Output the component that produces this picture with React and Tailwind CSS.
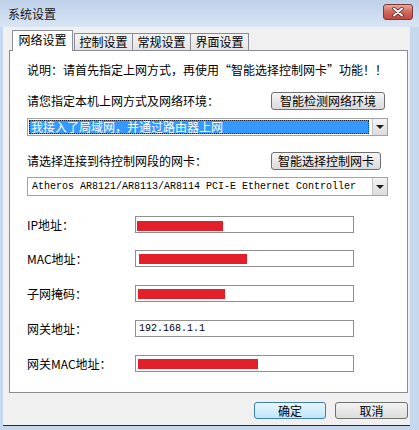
import React from 'react';

const cjk = "font-['Noto_Sans_CJK_SC','Noto_Sans',sans-serif]";
const mono = "font-['Liberation_Mono',monospace]";

const Arrow = () => (
    <div className="w-[15px] h-full border-l border-[#c4c4c4] bg-gradient-to-b from-[#f4f4f4] to-[#dcdcdc] flex items-center justify-center">
        <div className="w-0 h-0 border-x-[4px] border-x-transparent border-t-[4px] border-t-[#1e1e1e]" />
    </div>
);

const SmallButton = ({ label, width }) => (
    <div className={`${width} h-[18px] rounded-[3px] border border-[#707070] bg-gradient-to-b from-[#f5f5f5] to-[#dadada] flex items-center justify-center text-[12px] leading-none text-black`}>
        {label}
    </div>
);

const fields = [
    { label: 'IP地址：', bar: 'w-[86px] ml-[1px] mt-[3px]', top: 'mt-[20px]' },
    { label: 'MAC地址：', bar: 'w-[108px] ml-[3px] mt-[0px]', top: 'mt-[17px]' },
    { label: '子网掩码：', bar: 'w-[87px] ml-[2px] mt-[1px]', top: 'mt-[18px]' },
    { label: '网关地址：', text: '192.168.1.1', top: 'mt-[18px]' },
    { label: '网关MAC地址：', bar: 'w-[120px] ml-[2px] mt-[0px]', top: 'mt-[18px]' },
];

export default function App() {
    return (
        <div className={`w-[419px] h-[430px] bg-[#c6d8ee] flex flex-col overflow-hidden ${cjk}`}>
            {/* title bar */}
            <div className="h-[27px] shrink-0 bg-gradient-to-b from-[#bed1e9] to-[#d8e5f4] flex items-center justify-between pl-[8px] pr-[6px]">
                <span className="text-[12px] leading-none text-[#141414]">系统设置</span>
                <div className="w-[30px] h-[16px] -mt-[4px] rounded-[3px] border border-[#7b3a36] bg-gradient-to-b from-[#e6a99c] via-[#d1675c] to-[#c2473d] flex items-center justify-center">
                    <svg width="12" height="10" viewBox="0 0 12 10">
                        <path d="M2 1.5 L10 8.5 M10 1.5 L2 8.5" stroke="#4a1d1a" strokeWidth="3.4" strokeLinecap="round" />
                        <path d="M2 1.5 L10 8.5 M10 1.5 L2 8.5" stroke="#ffffff" strokeWidth="2" strokeLinecap="round" />
                    </svg>
                </div>
            </div>

            {/* dialog body */}
            <div className="flex-1 ml-[3px] mr-[9px] mb-[4px] bg-[#f0f0f0] border-b border-[#2c2c2c] flex flex-col pt-[3px]">
                <div className="relative z-10 flex items-end ml-[9px] -mb-px">
                    <div className="w-[61px] h-[21px] bg-white border border-b-0 border-[#898c95] flex items-center justify-center text-[12px] leading-none pb-[2px]">网络设置</div>
                    {['控制设置', '常规设置', '界面设置'].map((t, i) => (
                        <div key={t} className={`${i === 0 ? 'ml-[1px] w-[59px]' : '-ml-px w-[59px]'} h-[17px] mb-px bg-gradient-to-b from-[#f3f3f3] to-[#e4e4e4] border border-b-0 border-[#898c95] flex items-center justify-center text-[12px] leading-none`}>{t}</div>
                    ))}
                </div>

                <div className="ml-[6px] mr-[2px] h-[343px] bg-white border border-[#898c95] pl-[17px] flex flex-col text-black">
                    <p className="mt-[12px] text-[12px] leading-[14px]">说明：请首先指定上网方式，再使用“智能选择控制网卡”功能！！</p>

                    <div className="mt-[15px] w-[358px] h-[18px] flex items-center justify-between">
                        <span className="text-[12px] leading-none">请您指定本机上网方式及网络环境：</span>
                        <SmallButton label="智能检测网络环境" width="w-[114px]" />
                    </div>

                    <div className="mt-[8px] w-[361px] h-[18px] border border-[#a3a3a3] flex bg-white">
                        <div className="flex-1 m-[1px] mr-[3px] bg-[#3399ff] border border-dotted border-[#1b2430] flex items-center pl-[1px] text-[12px] leading-none text-white">
                            我接入了局域网，并通过路由器上网
                        </div>
                        <Arrow />
                    </div>

                    <div className="mt-[16px] w-[354px] h-[18px] flex items-center justify-between">
                        <span className="text-[12px] leading-none">请选择连接到待控制网段的网卡：</span>
                        <SmallButton label="智能选择控制网卡" width="w-[110px]" />
                    </div>

                    <div className="mt-[7px] w-[361px] h-[19px] border border-[#a3a3a3] flex bg-white">
                        <div className={`flex-1 flex items-center pl-[4px] text-[10px] leading-none ${mono}`}>
                            Atheros AR8121/AR8113/AR8114 PCI-E Ethernet Controller
                        </div>
                        <Arrow />
                    </div>

                    {fields.map(f => (
                        <div key={f.label} className={`${f.top} h-[17px] flex items-center`}>
                            <span className="w-[108px] text-[12px] leading-none">{f.label}</span>
                            <div className="w-[219px] h-[17px] border border-[#8e8f8f] bg-white flex items-center">
                                {f.bar && <div className={`${f.bar} h-[10px] bg-[#e3202a]`} />}
                                {f.text && <span className={`ml-[3px] text-[10px] leading-none ${mono}`}>{f.text}</span>}
                            </div>
                        </div>
                    ))}
                </div>

                <div className="mt-[9px] mr-[2px] flex justify-end gap-[9px]">
                    <div className="w-[72px] h-[17px] rounded-[3px] border border-[#3c7fb1] bg-gradient-to-b from-[#eaf6fd] to-[#bee6fd] flex items-center justify-center text-[12px] leading-none">确定</div>
                    <div className="w-[73px] h-[17px] rounded-[3px] border border-[#707070] bg-gradient-to-b from-[#f3f3f3] to-[#dddddd] flex items-center justify-center text-[12px] leading-none">取消</div>
                </div>
            </div>
        </div>
    );
}
